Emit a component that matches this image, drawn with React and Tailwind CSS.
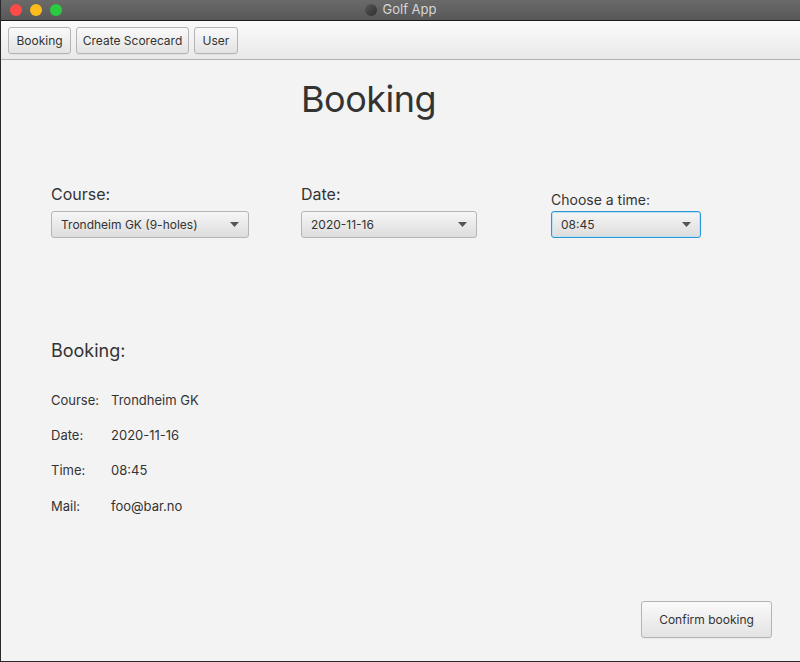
import React from "react";

const font = { fontFamily: "Inter, 'Noto Sans', sans-serif" };

function Btn({ children, className = "" }) {
  return (
    <div
      className={
        "flex items-center justify-center rounded-[3px] border border-[#b4b4b4] bg-gradient-to-b from-[#fafafa] to-[#e3e3e3] text-[12px] text-[#333] shadow-[0_1px_0_rgba(0,0,0,0.04)] " +
        className
      }
    >
      {children}
    </div>
  );
}

function Arrow() {
  return (
    <svg width="9" height="5" viewBox="0 0 9 5" className="shrink-0">
      <path d="M0 0 L9 0 L4.5 5 Z" fill="#555" />
    </svg>
  );
}

function Combo({ value, width, focused }) {
  return (
    <div
      className={
        "flex h-[27px] items-center justify-between rounded-[3px] bg-gradient-to-b from-[#f6f6f6] to-[#dddddd] pl-[9px] pr-[9px] text-[12px] text-[#333] " +
        (focused
          ? "border border-[#2a98d8] shadow-[inset_0_0_0_1px_#bfe0f3]"
          : "border border-[#b6b6b6]")
      }
      style={{ width }}
    >
      <span>{value}</span>
      <Arrow />
    </div>
  );
}

export default function App() {
  return (
    <div
      className="flex h-[662px] w-[800px] flex-col overflow-hidden border-b border-l border-[#2a2a2a] bg-[#f3f3f3]"
      style={font}
    >
      {/* title bar */}
      <div className="relative flex h-[20px] shrink-0 items-center bg-gradient-to-b from-[#6a6a6a] to-[#585858]">
        <div className="flex items-center gap-[8px] pl-[9px]">
          <div className="h-[12px] w-[12px] rounded-full bg-[#fd4c47]" />
          <div className="h-[12px] w-[12px] rounded-full bg-[#fdbb1c]" />
          <div className="h-[12px] w-[12px] rounded-full bg-[#2acb3e]" />
        </div>
        <div className="absolute left-0 right-0 top-0 flex h-[20px] items-center justify-center gap-[6px] text-[13px] text-[#d6d6d6]">
          <div className="h-[12px] w-[12px] rounded-full bg-gradient-to-br from-[#5a5a5a] to-[#2e2e2e]" />
          <span>Golf App</span>
        </div>
      </div>
      <div className="h-px shrink-0 bg-[#1c1c1c]" />
      {/* toolbar */}
      <div className="flex h-[39px] shrink-0 items-center gap-[5px] border-b border-[#b1b1b1] bg-gradient-to-b from-[#fbfbfb] to-[#e9e9e9] pl-[7px] pt-[1px]">
        <Btn className="h-[27px] w-[63px]">Booking</Btn>
        <Btn className="h-[27px] w-[113px]">Create Scorecard</Btn>
        <Btn className="h-[27px] w-[44px]">User</Btn>
      </div>

      {/* content */}
      <div className="flex flex-1 flex-col pl-[50px] text-[#333]">
        <div className="grid grid-cols-[250px_250px_250px]">
          <div />
          <div className="pt-[17px] text-[36px] leading-[44px] tracking-[-0.5px]">Booking</div>
          <div />
        </div>

        <div className="mt-[63px] grid grid-cols-[250px_250px_250px] items-end">
          <div className="flex flex-col gap-[7px]">
            <div className="text-[16px] leading-[20px]">Course:</div>
            <Combo value="Trondheim GK (9-holes)" width={198} />
          </div>
          <div className="flex flex-col gap-[7px]">
            <div className="text-[16px] leading-[20px]">Date:</div>
            <Combo value="2020-11-16" width={176} />
          </div>
          <div className="flex flex-col gap-[2px]">
            <div className="text-[14px] leading-[18px]">Choose a time:</div>
            <Combo value="08:45" width={150} focused />
          </div>
        </div>

        <div className="mt-[102px] text-[18px] leading-[22px]">Booking:</div>

        <div className="mt-[21px] flex flex-col text-[13px]">
          <div className="flex h-[35px] items-center">
            <span className="w-[60px]">Course:</span>
            <span>Trondheim GK</span>
          </div>
          <div className="flex h-[35px] items-center">
            <span className="w-[60px]">Date:</span>
            <span>2020-11-16</span>
          </div>
          <div className="flex h-[35px] items-center">
            <span className="w-[60px]">Time:</span>
            <span>08:45</span>
          </div>
          <div className="flex h-[37px] items-center">
            <span className="w-[60px]">Mail:</span>
            <span>foo@bar.no</span>
          </div>
        </div>

        <div className="flex flex-1 items-end justify-end pb-[23px] pr-[28px]">
          <Btn className="h-[37px] w-[131px]">Confirm booking</Btn>
        </div>
      </div>
    </div>
  );
}
